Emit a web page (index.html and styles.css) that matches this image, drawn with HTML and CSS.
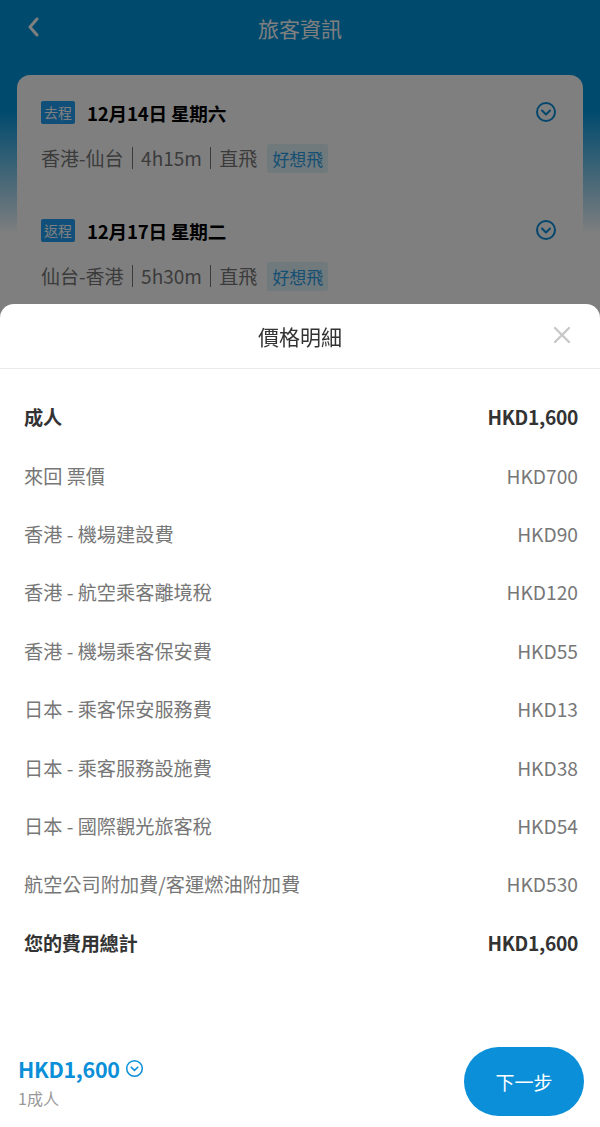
FILE: index.html
```html
<!DOCTYPE html>
<html lang="zh-Hant">
<head>
  <meta charset="UTF-8">
  <title>旅客資訊</title>
  <meta name="viewport" content="width=device-width, initial-scale=1.0">
  <link rel="stylesheet" href="styles.css">
</head>
<body>
  <div class="page">
    <div class="topbar">
      <svg class="back" width="14" height="22" viewBox="0 0 14 22"><path d="M11 3 L4 11 L11 19" fill="none" stroke="#fff" stroke-width="3" stroke-linecap="round" stroke-linejoin="round"/></svg>
      <h1>旅客資訊</h1>
    </div>

    <div class="card">
      <div class="leg">
        <div class="leg-head">
          <span class="tag">去程</span>
          <span class="date">12月14日 星期六</span>
          <svg class="chev" width="22" height="22" viewBox="0 0 22 22"><circle cx="11" cy="11" r="9" fill="none" stroke="#0a8fd8" stroke-width="2"/><path d="M7 9.5 L11 13.5 L15 9.5" fill="none" stroke="#0a8fd8" stroke-width="2" stroke-linecap="round" stroke-linejoin="round"/></svg>
        </div>
        <div class="leg-info">香港-仙台<i class="sep"></i>4h15m<i class="sep"></i>直飛<span class="brand">好想飛</span></div>
      </div>
      <div class="leg">
        <div class="leg-head">
          <span class="tag">返程</span>
          <span class="date">12月17日 星期二</span>
          <svg class="chev" width="22" height="22" viewBox="0 0 22 22"><circle cx="11" cy="11" r="9" fill="none" stroke="#0a8fd8" stroke-width="2"/><path d="M7 9.5 L11 13.5 L15 9.5" fill="none" stroke="#0a8fd8" stroke-width="2" stroke-linecap="round" stroke-linejoin="round"/></svg>
        </div>
        <div class="leg-info">仙台-香港<i class="sep"></i>5h30m<i class="sep"></i>直飛<span class="brand">好想飛</span></div>
      </div>
    </div>
  </div>

  <div class="mask"></div>

  <div class="sheet">
    <div class="sheet-head">
      <h2>價格明細</h2>
      <svg class="close" width="20" height="20" viewBox="0 0 20 20"><path d="M3 3 L17 17 M17 3 L3 17" stroke="#c8c8c8" stroke-width="2.4" stroke-linecap="round"/></svg>
    </div>

    <ul class="prices">
      <li class="strong"><span>成人</span><span>HKD1,600</span></li>
      <li><span>來回 票價</span><span>HKD700</span></li>
      <li><span>香港 - 機場建設費</span><span>HKD90</span></li>
      <li><span>香港 - 航空乘客離境稅</span><span>HKD120</span></li>
      <li><span>香港 - 機場乘客保安費</span><span>HKD55</span></li>
      <li><span>日本 - 乘客保安服務費</span><span>HKD13</span></li>
      <li><span>日本 - 乘客服務設施費</span><span>HKD38</span></li>
      <li><span>日本 - 國際觀光旅客稅</span><span>HKD54</span></li>
      <li><span>航空公司附加費/客運燃油附加費</span><span>HKD530</span></li>
      <li class="strong"><span>您的費用總計</span><span>HKD1,600</span></li>
    </ul>

    <div class="footer">
      <div class="total">
        <div class="total-price">HKD1,600
          <svg width="19" height="19" viewBox="0 0 20 20"><circle cx="10" cy="10" r="8.2" fill="none" stroke="#0a8fd8" stroke-width="1.6"/><path d="M6.6 8.6 L10 12 L13.4 8.6" fill="none" stroke="#0a8fd8" stroke-width="1.6" stroke-linecap="round" stroke-linejoin="round"/></svg>
        </div>
        <div class="pax">1成人</div>
      </div>
      <button class="next">下一步</button>
    </div>
  </div>
</body>
</html>
```

FILE: styles.css
```css
* {
  box-sizing: border-box;
}
body {
  margin: 0;
  height: 1127px;
  overflow: hidden;
  font-family: "Noto Sans CJK TC", "Noto Sans", sans-serif;
  background-color: #fff;
}
.page {
  height: 1127px;
  background: linear-gradient(#0094dc 0, #0094dc 110px, #ffffff 235px);
}
.topbar {
  height: 75px;
  display: flex;
  align-items: flex-start;
  justify-content: center;
  padding-top: 8px;
  position: relative;
}
.topbar h1 {
  margin: 0;
  font-size: 21px;
  font-weight: normal;
  line-height: 40px;
  color: #fff;
}
.back {
  position: absolute;
  left: 26px;
  top: 16px;
}
.card {
  margin: 0 17px;
  background-color: #fff;
  border-radius: 13px;
  padding: 22px 23px 20px 24px;
}
.leg {
  padding-bottom: 41px;
}
.leg-head {
  display: flex;
  align-items: center;
  height: 30px;
}
.tag {
  background-color: #1f9ff2;
  color: #fff;
  font-size: 14px;
  line-height: 23px;
  padding: 0 3px;
  border-radius: 2px;
}
.date {
  margin-left: 12px;
  font-size: 18.6px;
  font-weight: bold;
  color: #000;
  letter-spacing: -0.2px;
}
.chev {
  margin-left: auto;
  margin-right: 3px;
}
.leg-info {
  margin-top: 15px;
  font-size: 19px;
  color: #777;
  line-height: 32px;
  display: flex;
  align-items: center;
}
.sep {
  display: inline-block;
  width: 1.5px;
  height: 22px;
  background-color: #777;
  margin: 0 8px;
}
.brand {
  margin-left: 10px;
  background-color: #e0f2f8;
  color: #2a9fe8;
  line-height: 29px;
  font-size: 17px;
  padding: 0 5px;
  border-radius: 3px;
}
.mask {
  position: fixed;
  inset: 0;
  background-color: rgba(0, 0, 0, 0.5);
}
.sheet {
  position: fixed;
  left: 0;
  right: 0;
  bottom: 0;
  height: 823px;
  background-color: #fff;
  border-radius: 14px 14px 0 0;
  display: flex;
  flex-direction: column;
}
.sheet-head {
  height: 65px;
  border-bottom: 1px solid #eaeaea;
  display: flex;
  align-items: center;
  justify-content: center;
  position: relative;
}
.sheet-head h2 {
  margin: 0;
  font-size: 21px;
  font-weight: normal;
  color: #333;
}
.close {
  position: absolute;
  right: 28px;
  top: 21px;
}
.prices {
  list-style: none;
  margin: 0;
  padding: 19px 22px 0 24px;
}
.prices li {
  height: 58.4px;
  display: flex;
  align-items: center;
  justify-content: space-between;
  font-size: 19.2px;
  color: #777;
}
.prices li.strong {
  color: #333;
  font-weight: bold;
  letter-spacing: -0.3px;
}
.footer {
  margin-top: auto;
  padding: 0 16px 11px 18px;
  display: flex;
  align-items: center;
  justify-content: space-between;
}
.total-price {
  font-size: 21.5px;
  font-weight: bold;
  color: #0a8fd8;
  display: flex;
  align-items: center;
  gap: 5px;
  letter-spacing: -0.3px;
}
.pax {
  margin-top: 2px;
  font-size: 16px;
  color: #999;
}
.next {
  width: 120px;
  height: 69px;
  border: none;
  border-radius: 35px;
  background-color: #0a8fd8;
  color: #fff;
  font-family: inherit;
  font-size: 19px;
  cursor: pointer;
}
```
